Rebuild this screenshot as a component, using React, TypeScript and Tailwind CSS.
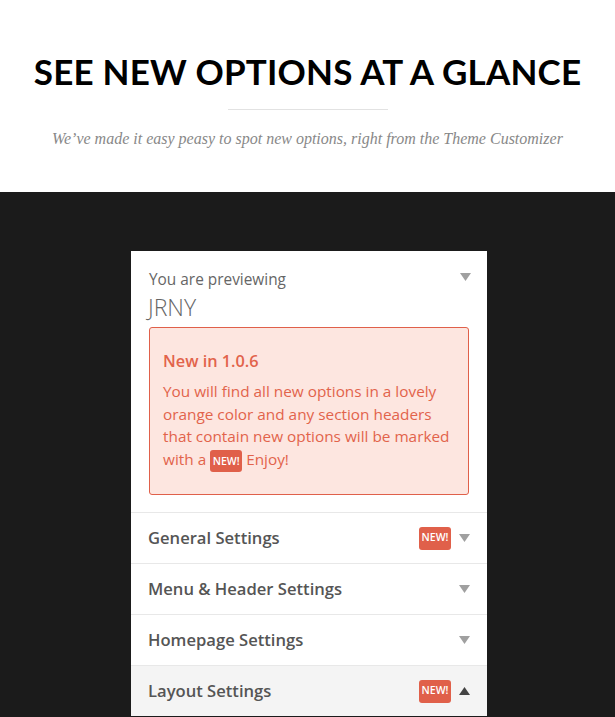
import React from 'react';

const Caret = ({ up = false }: { up?: boolean }) => (
  <svg width="11" height="8" viewBox="0 0 11 8" className={up ? 'text-[#444]' : 'text-[#a0a0a0]'}>
    {up ? <path d="M0 8 L5.5 0 L11 8 Z" fill="currentColor" /> : <path d="M0 0 L11 0 L5.5 8 Z" fill="currentColor" />}
  </svg>
);

const NewBadge = ({ small = false }: { small?: boolean }) => (
  <span
    className={`inline-flex items-center justify-center rounded-[3px] bg-[#e0604a] text-white font-semibold text-[10.5px] ${
      small ? 'h-[22px] w-[32px] align-middle' : 'h-[23px] w-[32px]'
    }`}
  >
    NEW!
  </span>
);

const sections = [
  { name: 'General Settings', isNew: true },
  { name: 'Menu & Header Settings', isNew: false },
  { name: 'Homepage Settings', isNew: false },
  { name: 'Layout Settings', isNew: true, open: true },
];

export default function App() {
  return (
    <div className="w-[615px] h-[717px] overflow-hidden bg-[#1b1b1b]">
      <div className="bg-white h-[192px] flex flex-col items-center pt-[50px]">
        <h1 className="font-['Lato',sans-serif] font-bold text-[35px] leading-[42px] tracking-[0.2px] text-black">
          SEE NEW OPTIONS AT A GLANCE
        </h1>
        <div className="w-[160px] h-px bg-[#e2e2e2] mt-[17px]" />
        <p className="mt-[17px] font-['Liberation_Serif',serif] italic text-[16px] text-[#888]">
          We’ve made it easy peasy to spot new options, right from the Theme Customizer
        </p>
      </div>

      <div className="pt-[59px] pl-[3px] flex justify-center font-['Open_Sans',sans-serif]">
        <div className="w-[356px] bg-white">
          <div className="px-[18px] pt-[18px] pb-[17px]">
            <div className="flex items-center justify-between">
              <span className="text-[15.4px] text-[#666] leading-[22px]">You are previewing</span>
              <span className="-mr-[2px] -mt-[6px]"><Caret /></span>
            </div>
            <div className="text-[23px] font-light text-[#666] leading-[32px] -ml-[1px]">JRNY</div>
            <div className="mt-[4px] border border-[#e0604a] rounded-[3px] bg-[#fde6e0] px-[13px] pt-[21px] pb-[22px] text-[#e2634b]">
              <div className="text-[16.3px] font-semibold leading-[24px]">New in 1.0.6</div>
              <p className="mt-[7px] text-[15.35px] leading-[22.7px]">
                You will find all new options in a lovely orange color and any section headers that contain new options will be marked with a <NewBadge small /> Enjoy!
              </p>
            </div>
          </div>
          {sections.map(s => (
            <div
              key={s.name}
              className={`h-[51px] border-t border-[#e8e8e8] flex items-center pl-[17px] pr-[17px] ${s.open ? 'bg-[#f4f4f4]' : ''}`}
            >
              <span className="flex-1 text-[16.6px] font-semibold text-[#555]">{s.name}</span>
              {s.isNew && <NewBadge />}
              <span className="ml-[8px]"><Caret up={s.open} /></span>
            </div>
          ))}
        </div>
      </div>
    </div>
  );
}
